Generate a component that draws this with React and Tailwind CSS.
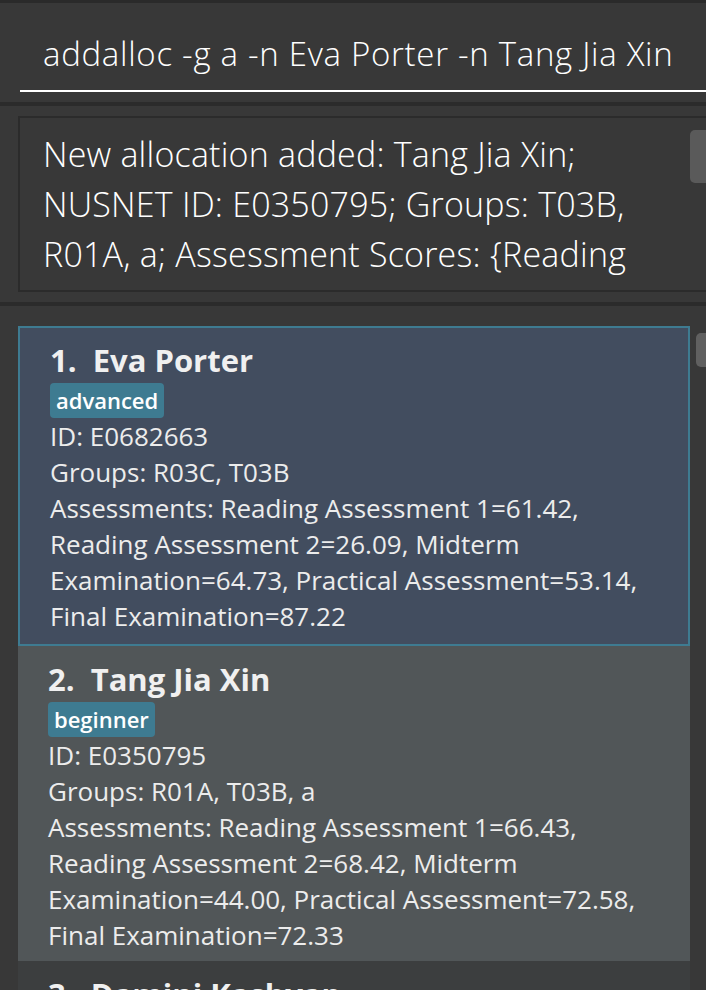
import React from 'react';

const persons = [
  {
    name: 'Eva Porter',
    tag: 'advanced',
    id: 'E0682663',
    groups: 'R03C, T03B',
    scores: 'Reading Assessment 1=61.42, Reading Assessment 2=26.09, Midterm Examination=64.73, Practical Assessment=53.14, Final Examination=87.22',
  },
  {
    name: 'Tang Jia Xin',
    tag: 'beginner',
    id: 'E0350795',
    groups: 'R01A, T03B, a',
    scores: 'Reading Assessment 1=66.43, Reading Assessment 2=68.42, Midterm Examination=44.00, Practical Assessment=72.58, Final Examination=72.33',
  },
  {
    name: 'Damini Kashyap',
    tag: 'intermediate',
    id: 'E0412345',
    groups: 'R02B, T01A',
    scores: 'Reading Assessment 1=70.00',
  },
];

const PersonCard = ({ index, person, selected }) => {
  const box = selected
    ? 'bg-[#424d5f] border-2 border-[#3e7b91] pl-[30px] pt-[12px] pb-[10px]'
    : index % 2 === 1
      ? 'bg-[#515658] pl-[30px] pt-[13px] pb-[8px]'
      : 'bg-[#3c3e3f] pl-[30px] pt-[13px] pb-[8px]';
  return (
    <div className={`${box} pr-4`}>
      <div className="text-[31px] leading-[40px] font-bold text-[#f0f0f0]">
        {index + 1}.&nbsp;&nbsp;{person.name}
      </div>
      <div className="flex mt-[3px]">
        <span className="bg-[#3e7b91] rounded-[4px] px-[6px] h-[35px] leading-[35px] text-[22px] font-semibold text-white">
          {person.tag}
        </span>
      </div>
      <div className="text-[26px] leading-[36px] text-[#ececec]">
        <div>ID: {person.id}</div>
        <div>Groups: {person.groups}</div>
        <div>Assessments: {person.scores}</div>
      </div>
    </div>
  );
};

export default function App() {
  return (
    <div className="w-[706px] h-[990px] overflow-hidden bg-[#383838] flex flex-col font-['Open_Sans',sans-serif]">
      <div className="h-[3px] bg-[#2a2a2a]" />

      {/* command box */}
      <div className="h-[99px] pl-[20px] pt-[28px]">
        <div className="border-b-2 border-white h-[61px] pl-[23px] text-[33px] tracking-[0.7px] font-light text-white leading-[46px] whitespace-nowrap">
          addalloc -g a -n Eva Porter -n Tang Jia Xin
        </div>
      </div>

      <div className="h-[4px] bg-[#2b2b2b]" />

      {/* result display */}
      <div className="h-[196px] pt-[10px] pl-[18px] relative">
        <div className="h-[176px] border-2 border-r-0 border-[#2b2b2b] pl-[23px] pr-[60px] pt-[11px] overflow-hidden">
          <p className="text-[34px] tracking-[0.2px] leading-[50px] font-light text-white">
            New allocation added: Tang Jia Xin; NUSNET ID: E0350795; Groups: T03B, R01A, a; Assessment Scores: {'{'}Reading Assessment 1=66.43{'}'}
          </p>
        </div>
        <div className="absolute right-0 top-[24px] w-[16px] h-[53px] rounded-l-[5px] bg-[#5a5a5a]" />
      </div>

      <div className="h-[4px] bg-[#2b2b2b]" />

      {/* list */}
      <div className="flex-1 relative pt-[20px] pl-[18px] overflow-hidden">
        <div className="w-[672px] flex flex-col">
          {persons.map((p, i) => (
            <PersonCard key={p.id} index={i} person={p} selected={i === 0} />
          ))}
        </div>
        <div className="absolute right-0 top-[27px] w-[10px] h-[34px] rounded-l-[5px] bg-[#606060]" />
      </div>
    </div>
  );
}
